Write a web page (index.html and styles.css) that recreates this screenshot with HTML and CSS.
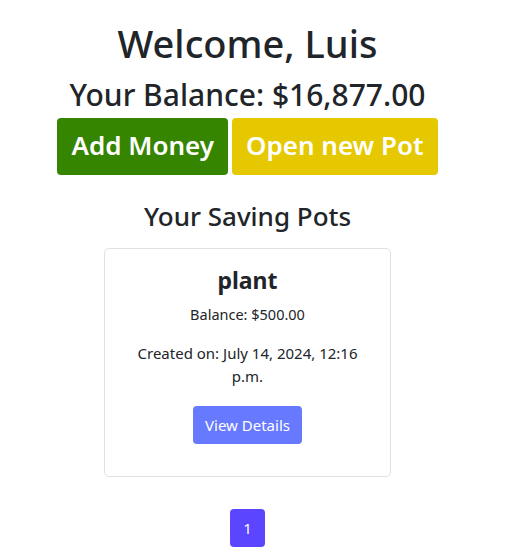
FILE: index.html
```html
<!DOCTYPE html>
<html>
<head>
<meta charset="utf-8">
<link rel="stylesheet" href="styles.css">
</head>
<body>
<main class="page">
  <h1 class="welcome">Welcome, Luis</h1>
  <h2 class="balance">Your Balance: $16,877.00</h2>
  <div class="actions">
    <a class="btn btn-green">Add Money</a>
    <a class="btn btn-yellow">Open new Pot</a>
  </div>
  <h3 class="pots-title">Your Saving Pots</h3>
  <div class="card">
    <h4 class="card-title">plant</h4>
    <p class="card-balance">Balance: $500.00</p>
    <p class="card-date">Created on: July 14, 2024, 12:16 p.m.</p>
    <a class="btn-details">View Details</a>
  </div>
  <nav class="pager">
    <span class="page-item">1</span>
  </nav>
</main>
</body>
</html>
```
FILE: styles.css
```css
* { box-sizing: border-box; }
body {
  margin: 0;
  font-family: "Noto Sans", "Open Sans", sans-serif;
  color: #212529;
  background: #fff;
}
.page {
  width: 495px;
  display: flex;
  flex-direction: column;
  align-items: center;
  padding-top: 21px;
}
.welcome {
  margin: 0;
  font-size: 38px;
  font-weight: 500;
  line-height: 1.2;
}
.balance {
  margin: 10px 0 0;
  font-size: 30px;
  font-weight: 500;
  line-height: 1.2;
}
.actions {
  display: flex;
  gap: 4px;
  margin-top: 5px;
}
.btn {
  display: block;
  font-size: 26px;
  font-weight: 600;
  color: #fff;
  padding: 0 14px;
  height: 57px;
  line-height: 55px;
  border-radius: 4px;
}
.btn-green { background: #368500; }
.btn-yellow { background: #e6c800; }
.pots-title {
  margin: 26px 0 0;
  font-size: 26px;
  font-weight: 500;
  line-height: 1.2;
}
.card {
  margin-top: 16px;
  width: 287px;
  border: 1px solid #dee2e6;
  border-radius: 5px;
  padding: 18px 16px 32px;
  display: flex;
  flex-direction: column;
  align-items: center;
  text-align: center;
}
.card-title {
  margin: 0;
  font-size: 23px;
  font-weight: 700;
  line-height: 1.2;
}
.card-balance {
  margin: 10px 0 0;
  font-size: 14.5px;
  line-height: 1.5;
}
.card-date {
  margin: 16px 0 0;
  font-size: 15px;
  line-height: 23px;
}
.btn-details {
  margin-top: 18px;
  background: #6779ff;
  color: #fff;
  font-size: 15px;
  padding: 0 12px;
  height: 38px;
  line-height: 38px;
  border-radius: 4px;
}
.pager {
  margin-top: 32px;
  display: flex;
}
.page-item {
  display: block;
  width: 35px;
  height: 38px;
  line-height: 38px;
  text-align: center;
  background: #5b45ff;
  color: #fff;
  font-size: 15px;
  border-radius: 4px;
}
```
